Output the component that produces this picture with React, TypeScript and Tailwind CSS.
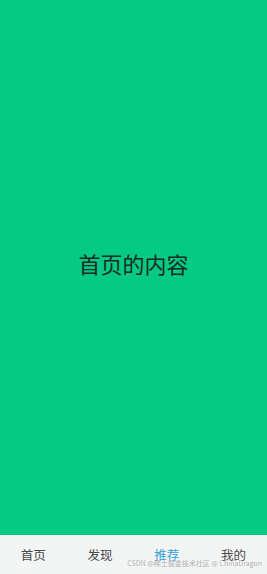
import React from "react";

export default function App() {
  const tabs = ["首页", "发现", "推荐", "我的"];
  return (
    <div className="flex h-[574px] w-[267px] flex-col overflow-hidden" style={{ fontFamily: '"Noto Sans CJK SC", "Noto Sans", sans-serif' }}>
      <div className="flex flex-1 items-center justify-center bg-[#05ca83]">
        <span className="mb-[10px] text-[22px] leading-none text-[#1b2b22]">首页的内容</span>
      </div>
      <div className="relative grid h-[39px] grid-cols-4 bg-[#f3f4f4]">
        {tabs.map((t, i) => (
          <div key={t} className={`flex items-center justify-center pt-[2px] text-[12.5px] ${i === 2 ? "text-[#3aa0d8]" : "text-[#4a4a4a]"}`}>
            {t}
          </div>
        ))}
        <div className="absolute bottom-[7px] right-[5px] whitespace-nowrap text-[7px] leading-none text-[#a8a8a8]/90">
          CSDN @稀土掘金技术社区 @ ChinaDragon
        </div>
      </div>
    </div>
  );
}
